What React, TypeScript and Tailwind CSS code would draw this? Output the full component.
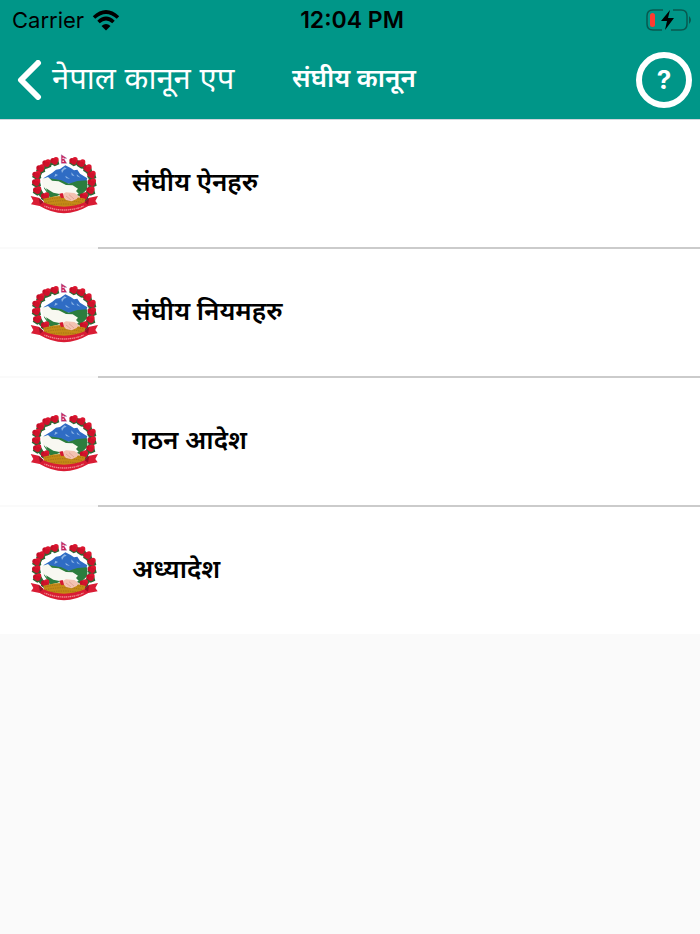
const items = ["संघीय ऐनहरु", "संघीय नियमहरु", "गठन आदेश", "अध्यादेश"];

const flowers = [
  [92, 35], [68, 42], [50, 57], [38, 76], [37, 99], [40, 123], [64, 141],
  [149, 35], [172, 42], [191, 57], [203, 76], [204, 99], [200, 123], [180, 141],
];

function Emblem() {
  return (
    <svg viewBox="0 0 240 210" className="h-[70px] w-20 shrink-0" aria-hidden="true">
      {/* leaves behind the garland */}
      <path
        d="M94 38C60 44 42 68 40 96c-1 20 4 36 22 50M148 38c34 6 52 30 54 58 1 20-4 36-22 50"
        fill="none"
        stroke="#3a6b38"
        strokeWidth="15"
      />
      {/* mountains */}
      <path d="M58 88 84 72 96 62 108 60 124 49 140 57 150 64 160 62 168 74 190 88 184 104H76z" fill="#2f6cc4" />
      <path d="M112 64l10-9 6 4-8 3-6 10zM142 70l10 12-9-3zM94 74l8 4-11 6zM124 80l14 10-12-3zM158 76l12 10-11-4z" fill="#8db5e6" />
      <path d="M58 92 76 88 112 94 134 104 160 96 190 94 190 120 168 142H76L60 118z" fill="#2c7d3e" />
      <path d="M54 90 72 84 84 95 104 97 126 108 146 109 162 119 156 126 164 134 154 140 104 140 72 128 56 110z" fill="#f8f8f1" />
      <path d="M66 118 88 131 110 136 78 147z" fill="#2c7d3e" />
      {/* garland */}
      {flowers.map(([x, y]) => (
        <g key={`${x}-${y}`}>
          <path d={`M${x - 14} ${y + 8}l7-12 18 3 3 12-14 6z`} fill="#2d6835" />
          <circle cx={x - 5} cy={y} r="8" fill="#c50d26" />
          <circle cx={x + 4} cy={y - 3} r="8" fill="#dc1630" />
          <circle cx={x + 1} cy={y + 4} r="8" fill="#cf122b" />
        </g>
      ))}
      {/* flag */}
      <path d="M112 17l16 11h-9l9 15h-16z" fill="#cf2258" stroke="#7e4d9b" strokeWidth="1" />
      <path d="M115 26h5v3h-5zM115 35h5v3h-5z" fill="#fff" />
      {/* base and hands */}
      <path d="M58 149Q120 131 184 149l-4 25q-60 17-118 0z" fill="#c48a16" />
      <path d="M63 153q56-14 116 0M65 161q56-12 111 0M68 169q52-8 104 0" fill="none" stroke="#946618" strokeWidth="2" strokeDasharray="4 3" />
      <path d="M112 137 126 130 151 132 165 141 158 150 143 157 126 153z" fill="#f3c2b2" />
      <path d="M126 141l15 12M135 137l15 13" stroke="#d89487" strokeWidth="2" />
      <path d="M106 134l10-2 4 14-9 1z" fill="#d51931" />
      {/* ribbon */}
      <path d="M20 141l24 5 14 14q62 26 124 0l14-14 26-5-8 15 7 10-28 5q-73 43-146 0l-26-5 7-10z" fill="#d91c34" />
      <path d="M44 146l4 21 11-8zM196 146l-4 21-11-8z" fill="#9f1027" />
      <path d="M61 171q59 24 119 0" fill="none" stroke="#ef8f92" strokeWidth="4" strokeDasharray="3 2 5 2" />
    </svg>
  );
}

function StatusBar() {
  return (
    <div className="grid h-10 grid-cols-3 items-center pl-3 pr-2 text-[22px] text-black">
      <div className="flex items-center gap-2">
        <span>Carrier</span>
        <svg viewBox="0 0 28 21" className="h-[21px] w-7" aria-hidden="true">
          <path d="M2 7.5Q14-3.500 26 7.500M6.500 12Q14 5 21.500 12" fill="none" stroke="currentColor" strokeWidth="3.600" />
          <path d="M9.500 16Q14 12 18.500 16L14 20.500z" fill="currentColor" />
        </svg>
      </div>
      <span className="text-center text-[23px] font-semibold">12:04 PM</span>
      <svg viewBox="0 0 46 22" className="h-[22px] w-[46px] justify-self-end" aria-hidden="true">
        <path d="M17 1H7Q1 1 1 7v8q0 6 6 6h9M27 1h8q6 0 6 6v8q0 6-6 6H25" fill="none" stroke="#08594f" strokeWidth="1.500" />
        <path d="M43 7q4 4 0 8z" fill="#08594f" />
        <rect x="4" y="4" width="5" height="14" rx="2.500" fill="#ff3b30" />
        <path d="M24 1 15 12h6l-2 9 9-12h-6z" fill="currentColor" />
      </svg>
    </div>
  );
}

export default function App() {
  return (
    <div className="min-h-screen bg-[#fafafa] font-['Inter','Noto_Sans',sans-serif]">
      <header className="border-b border-gray-300 bg-[#009688]">
        <StatusBar />
        <nav className="grid h-[79px] grid-cols-[1fr_auto_1fr] items-center pl-4 pr-2 text-white">
          <a href="#" className="flex items-center gap-2 text-[31px] leading-10">
            <svg viewBox="0 0 28 40" className="h-10 w-7" aria-hidden="true">
              <path d="M22 3 5 20l17 17" fill="none" stroke="currentColor" strokeWidth="6" strokeLinecap="round" strokeLinejoin="round" />
            </svg>
            <span className="pb-1">नेपाल कानून एप</span>
          </a>
          <h1 className="pb-1 text-[26px] font-semibold leading-10">संघीय कानून</h1>
          <button
            type="button"
            aria-label="Help"
            className="flex size-14 items-center justify-center justify-self-end rounded-full border-[6px] border-white text-[26px] font-bold"
          >
            ?
          </button>
        </nav>
      </header>
      <ul className="bg-white">
        {items.map((item) => (
          <li key={item} className="group">
            <a href="#" className="flex h-[127px] items-center pl-6">
              <Emblem />
              <span className="ml-7 pb-1 text-[26px] font-semibold leading-10 text-black">{item}</span>
            </a>
            <div className="bg-[#fafafa] pl-[98px] group-last:hidden">
              <div className="h-0.5 bg-[#cbcbcb]" />
            </div>
          </li>
        ))}
      </ul>
    </div>
  );
}
